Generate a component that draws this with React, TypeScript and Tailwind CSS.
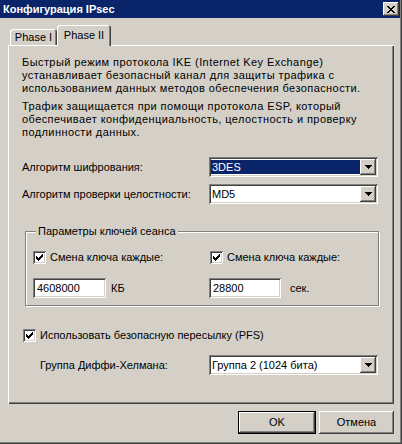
import React from "react";

const raised =
  "shadow-[inset_-1px_-1px_0_#404040,inset_1px_1px_0_#ffffff,inset_-2px_-2px_0_#808080]";
const sunken =
  "shadow-[inset_1px_1px_0_#808080,inset_-1px_-1px_0_#ffffff,inset_2px_2px_0_#404040,inset_-2px_-2px_0_#d4d0c8]";
const tabEdge =
  "shadow-[inset_1px_1px_0_#ffffff,inset_-1px_0_0_#404040,inset_-2px_0_0_#808080]";

const CHECK = "M6 0h1v1h-1z M5 1h2v1h-2z M0 2h1v1h-1z M4 2h3v1h-3z M0 3h2v1h-2z M3 3h3v1h-3z M0 4h5v1h-5z M1 5h3v1h-3z M2 6h1v1h-1z";
const CROSS = "M0 0h2v1h-2z M6 0h2v1h-2z M1 1h2v1h-2z M5 1h2v1h-2z M2 2h4v1h-4z M3 3h2v1h-2z M2 4h4v1h-4z M1 5h2v1h-2z M5 5h2v1h-2z M0 6h2v1h-2z M6 6h2v1h-2z";
const ARROW = "M0 0h7v1h-7z M1 1h5v1h-5z M2 2h3v1h-3z M3 3h1v1h-1z";

function CheckBox() {
  return (
    <div className={`w-[13px] h-[13px] shrink-0 bg-white ${sunken} flex items-center justify-center`}>
      <svg width="7" height="7" viewBox="0 0 7 7" shapeRendering="crispEdges">
        <path d={CHECK} fill="#000" />
      </svg>
    </div>
  );
}

function Combo({ value, active = false }: { value: string; active?: boolean }) {
  return (
    <div className={`w-[169px] h-[20px] shrink-0 bg-white ${sunken} flex p-[2px]`}>
      <div className="flex-1 flex items-center">
        <div
          className={`h-[14px] w-full flex items-center px-[1px] ${
            active ? "bg-[#0a246a] text-white" : ""
          }`}
        >
          {value}
        </div>
      </div>
      <div className={`w-[16px] bg-[#d4d0c8] ${raised} flex items-center justify-center`}>
        <svg width="7" height="4" viewBox="0 0 7 4" shapeRendering="crispEdges">
          <path d={ARROW} fill="#000" />
        </svg>
      </div>
    </div>
  );
}

function Field({ value, width }: { value: string; width: string }) {
  return (
    <div className={`${width} h-[20px] shrink-0 bg-white ${sunken} flex items-center pl-[4px]`}>
      {value}
    </div>
  );
}

export default function App() {
  return (
    <div className="w-[402px] h-[444px] bg-[#d4d0c8] font-['Liberation_Sans',Arial,sans-serif] text-[11px] leading-[13px] text-black shadow-[inset_-1px_-1px_0_#404040,inset_-2px_-2px_0_#808080] flex flex-col">
      {/* Title bar */}
      <div className="h-[18px] mr-[2px] bg-[#0a246a] flex items-center justify-between pl-[3px] pr-[1px]">
        <span className="text-white font-bold">Конфигурация IPsec</span>
        <div className={`w-[16px] h-[14px] bg-[#d4d0c8] ${raised} flex items-center justify-center`}>
          <svg width="8" height="7" viewBox="0 0 8 7" shapeRendering="crispEdges">
            <path d={CROSS} fill="#000" />
          </svg>
        </div>
      </div>

      <div className="px-[8px]">
        {/* Tabs */}
        <div className="mt-[7px] h-[20px] flex items-end pl-[2px]">
          <div className={`w-[47px] h-[16px] rounded-t-[3px] ${tabEdge} flex items-center justify-center`}>
            Phase I
          </div>
          <div
            className={`relative z-10 w-[54px] h-[21px] -mb-[1px] rounded-t-[3px] bg-[#d4d0c8] ${tabEdge} flex items-start justify-center pt-[4px]`}
          >
            Phase II
          </div>
        </div>

        {/* Tab page */}
        <div className="h-[359px] shadow-[inset_1px_1px_0_#ffffff,inset_-1px_-1px_0_#404040,inset_-2px_-2px_0_#808080] pt-[11px] pl-[14px]">
          <p className="tracking-[0.42px]">
            Быстрый режим протокола IKE (Internet Key Exchange)
            <br />
            устанавливает безопасный канал для защиты трафика с
            <br />
            использованием данных методов обеспечения безопасности.
          </p>
          <p className="mt-[5px] tracking-[0.42px]">
            Трафик защищается при помощи протокола ESP, который
            <br />
            обеспечивает конфиденциальность, целостность и проверку
            <br />
            подлинности данных.
          </p>

          <div className="mt-[18px] flex items-center">
            <span className="w-[187px]">Алгоритм шифрования:</span>
            <Combo value="3DES" active />
          </div>
          <div className="mt-[7px] flex items-center">
            <span className="w-[187px]">Алгоритм проверки целостности:</span>
            <Combo value="MD5" />
          </div>

          {/* Session key group */}
          <fieldset className="mt-[21px] ml-[3px] w-[354px] border border-[#808080] shadow-[1px_1px_0_#ffffff,inset_1px_1px_0_#ffffff] pl-[7px] pb-[7px]">
            <legend className="ml-[3px] px-[2px] bg-[#d4d0c8] leading-[13px]">Параметры ключей сеанса</legend>
            <div className="mt-[13px] flex">
              <div className="w-[176px] flex items-center gap-[4px]">
                <CheckBox />
                <span>Смена ключа каждые:</span>
              </div>
              <div className="flex items-center gap-[4px] ml-[1px]">
                <CheckBox />
                <span>Смена ключа каждые:</span>
              </div>
            </div>
            <div className="mt-[14px] flex">
              <div className="w-[176px] flex items-center">
                <Field value="4608000" width="w-[73px]" />
                <span className="ml-[5px]">КБ</span>
              </div>
              <div className="flex items-center">
                <Field value="28800" width="w-[72px]" />
                <span className="ml-[9px]">сек.</span>
              </div>
            </div>
          </fieldset>

          <div className="mt-[23px] ml-[1px] flex items-center gap-[4px]">
            <CheckBox />
            <span>Использовать безопасную пересылку (PFS)</span>
          </div>
          <div className="mt-[13px] flex items-center">
            <span className="w-[187px] pl-[18px]">Группа Диффи-Хелмана:</span>
            <Combo value="Группа 2 (1024 бита)" />
          </div>
        </div>

        {/* Buttons */}
        <div className="mt-[7px] flex justify-end gap-[3px]">
          <div className={`w-[78px] h-[23px] border border-black ${raised} flex items-center justify-center`}>
            OK
          </div>
          <div className={`w-[75px] h-[23px] ${raised} flex items-center justify-center`}>
            Отмена
          </div>
        </div>
      </div>
    </div>
  );
}
